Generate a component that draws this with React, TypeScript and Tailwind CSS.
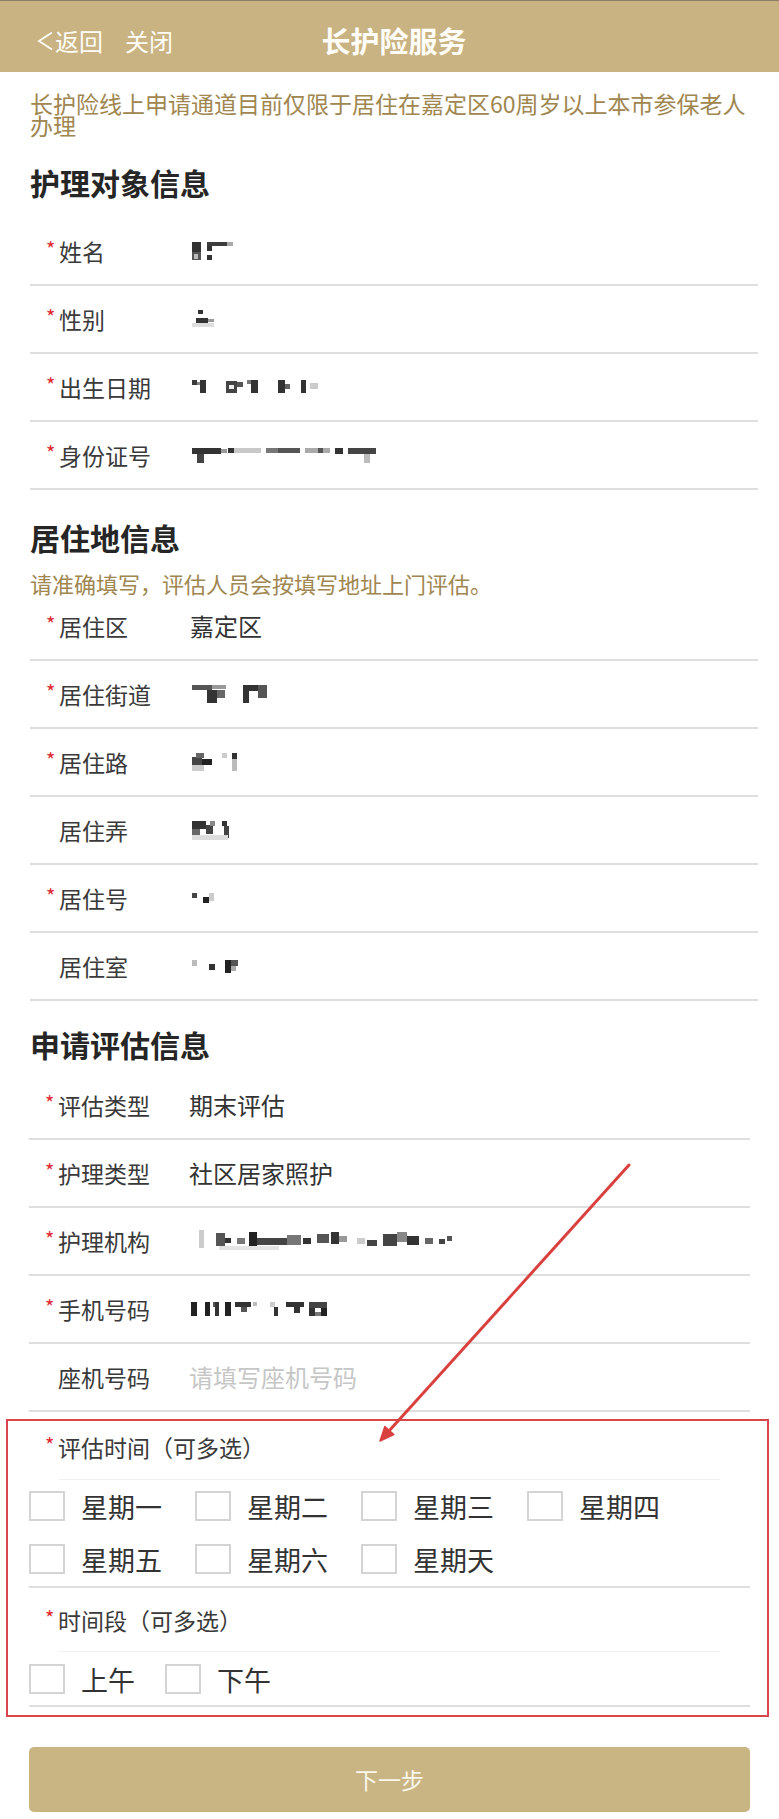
import React from "react";

type R = [number, number, number, number, string];

function Mosaic({ w, h, rects, ox = 2 }: { w: number; h: number; rects: R[]; ox?: number }) {
  return (
    <svg width={w + ox} height={h} viewBox={`0 0 ${w + ox} ${h}`} className="block">
      <g transform={`translate(${ox},0)`}>
        {rects.map((r, i) => (
          <rect key={i} x={r[0]} y={r[1]} width={r[2]} height={r[3]} fill={r[4]} />
        ))}
      </g>
    </svg>
  );
}

const M = {
  name: { w: 42, h: 19, rects: [[0, 0, 9, 10, "#333"], [0, 10, 9, 8, "#555"], [2, 12, 4, 5, "#bbb"], [15, 0, 5, 9, "#333"], [15, 0, 26, 4, "#3d3d3d"], [15, 13, 5, 5, "#333"], [35, 0, 6, 4, "#aaa"]] as R[] },
  sex: { w: 22, h: 18, rects: [[6, 0, 5, 4, "#333"], [4, 8, 12, 5, "#333"], [16, 9, 6, 3, "#999"], [0, 13, 22, 4, "#ddd"]] as R[] },
  birth: { w: 126, h: 14, rects: [[0, 0, 5, 5, "#3a3a3a"], [5, 2, 3, 3, "#888"], [8, 0, 6, 13, "#333"], [34, 1, 11, 12, "#444"], [37, 5, 5, 4, "#eee"], [45, 2, 6, 5, "#555"], [55, 0, 4, 4, "#777"], [59, 0, 7, 13, "#333"], [86, 0, 7, 13, "#333"], [93, 4, 5, 5, "#666"], [109, 0, 5, 13, "#333"], [118, 3, 8, 6, "#ccc"]] as R[] },
  id: { w: 184, h: 15, rects: [[0, 0, 29, 6, "#333"], [5, 6, 7, 9, "#444"], [29, 1, 6, 4, "#999"], [36, 0, 6, 5, "#333"], [42, 0, 27, 5, "#c8c8c8"], [74, 0, 12, 5, "#777"], [86, 0, 22, 5, "#555"], [113, 0, 25, 5, "#aaa"], [126, 0, 5, 5, "#555"], [143, 0, 8, 6, "#333"], [156, 0, 28, 6, "#444"], [172, 6, 6, 9, "#bbb"]] as R[] },
  street: { w: 75, h: 18, rects: [[0, 0, 20, 5, "#555"], [20, 0, 14, 4, "#999"], [15, 5, 10, 13, "#333"], [25, 5, 8, 8, "#666"], [51, 0, 24, 6, "#333"], [51, 0, 6, 18, "#333"], [66, 0, 9, 13, "#555"]] as R[] },
  road: { w: 46, h: 18, rects: [[0, 4, 10, 8, "#444"], [4, 0, 8, 5, "#666"], [10, 6, 10, 6, "#222"], [0, 12, 12, 6, "#ccc"], [30, 0, 5, 5, "#ccc"], [40, 0, 5, 6, "#333"], [40, 6, 5, 12, "#bbb"]] as R[] },
  lane: { w: 40, h: 19, rects: [[0, 0, 14, 8, "#333"], [0, 8, 8, 6, "#666"], [14, 4, 7, 9, "#444"], [18, 0, 5, 5, "#888"], [30, 0, 5, 5, "#333"], [32, 5, 5, 12, "#444"], [0, 14, 36, 5, "#ddd"]] as R[] },
  num: { w: 23, h: 10, rects: [[0, 0, 5, 5, "#444"], [11, 4, 6, 6, "#222"], [17, 0, 5, 8, "#ccc"]] as R[] },
  room: { w: 46, h: 13, rects: [[0, 0, 5, 6, "#bbb"], [17, 4, 6, 6, "#333"], [33, 0, 6, 13, "#222"], [39, 0, 7, 6, "#555"], [39, 6, 5, 5, "#aaa"]] as R[] },
  org: { w: 254, h: 22, rects: [[0, 0, 5, 18, "#ccc"], [17, 3, 9, 13, "#555"], [26, 8, 6, 5, "#333"], [38, 8, 8, 6, "#777"], [50, 2, 8, 16, "#222"], [58, 8, 30, 7, "#444"], [88, 5, 14, 10, "#777"], [104, 8, 8, 6, "#333"], [118, 4, 12, 9, "#555"], [132, 2, 8, 12, "#333"], [140, 6, 8, 6, "#999"], [158, 8, 8, 6, "#ccc"], [168, 10, 10, 6, "#444"], [184, 4, 14, 12, "#444"], [198, 2, 10, 10, "#888"], [208, 6, 12, 9, "#333"], [226, 8, 8, 6, "#666"], [240, 9, 6, 5, "#444"], [248, 6, 5, 5, "#555"], [20, 16, 60, 4, "#e4e4e4"]] as R[] },
  phone: { w: 152, h: 14, rects: [[0, 0, 6, 14, "#222"], [14, 0, 5, 14, "#222"], [22, 0, 5, 5, "#555"], [24, 0, 4, 14, "#333"], [34, 0, 6, 14, "#222"], [44, 0, 16, 5, "#333"], [50, 5, 6, 5, "#555"], [62, 0, 4, 4, "#bbb"], [79, 0, 5, 5, "#ccc"], [83, 5, 4, 9, "#333"], [95, 0, 18, 5, "#333"], [103, 5, 6, 6, "#333"], [118, 0, 18, 6, "#444"], [118, 6, 6, 8, "#333"], [130, 6, 6, 8, "#222"], [124, 10, 6, 4, "#777"]] as R[] },
};

function Label({ text, req }: { text: string; req?: boolean }) {
  return (
    <div className="flex items-center pl-[16px] text-[23px] leading-[24px] text-[#3a3a3a] whitespace-nowrap">
      <span className="w-[13px] text-[20px] leading-none text-[#e0282f] mb-[4px]">{req ? "*" : ""}</span>
      <span>{text}</span>
    </div>
  );
}

function Row({ label, req, children }: { label: string; req?: boolean; children: React.ReactNode }) {
  return (
    <div className="flex items-center h-[68px] border-b-2 border-[#dedede]">
      <div className="w-[160px] shrink-0">
        <Label text={label} req={req} />
      </div>
      <div className="flex items-center text-[24px] leading-[24px] text-[#333]">{children}</div>
    </div>
  );
}

function Title({ text, cls }: { text: string; cls: string }) {
  return <h2 className={`px-[30px] text-[30px] font-bold leading-[30px] text-[#262626] ${cls}`}>{text}</h2>;
}

function Box() {
  return <div className="w-[36px] h-[30px] border-2 border-[#d4d4d4] bg-white shrink-0" />;
}

function Check({ text }: { text: string }) {
  return (
    <div className="flex items-center">
      <Box />
      <span className="ml-[16px] text-[27px] leading-none text-[#333]">{text}</span>
    </div>
  );
}

export default function App() {
  return (
    <div className="relative w-full min-h-[1819px] bg-white font-['Noto_Sans_CJK_SC','Noto_Sans',sans-serif]">
      <header className="h-[72px] bg-[#c9b382] border-t border-[#8d806a] grid grid-cols-[1fr_auto_1fr] items-center pt-[8px] text-[#fffdf8]">
        <div className="flex items-center pl-[37px]">
          <svg width="17" height="20" viewBox="0 0 17 20" className="block">
            <polyline points="15,1.5 2,10 15,18.5" fill="none" stroke="#fffdf8" strokeWidth="1.8" strokeLinejoin="miter" />
          </svg>
          <span className="ml-[1px] text-[24px] leading-none">返回</span>
          <span className="ml-[22px] text-[24px] leading-none">关闭</span>
        </div>
        <div className="pl-[9px] text-[29px] font-bold leading-none">长护险服务</div>
        <div />
      </header>

      <div className="pl-[30px] pr-[24px] pt-[20px] text-[23px] leading-[22px] text-[#a0864f]">
        长护险线上申请通道目前仅限于居住在嘉定区60周岁以上本市参保老人办理
      </div>

      <Title text="护理对象信息" cls="mt-[31px] mb-[21px]" />
      <div className="ml-[30px] mr-[21px]">
        <Row label="姓名" req><Mosaic {...M.name} /></Row>
        <Row label="性别" req><Mosaic {...M.sex} /></Row>
        <Row label="出生日期" req><Mosaic {...M.birth} /></Row>
        <Row label="身份证号" req><Mosaic {...M.id} /></Row>
      </div>

      <Title text="居住地信息" cls="mt-[32px]" />
      <div className="mt-[21px] px-[30px] text-[22px] leading-[20px] text-[#a0864f]">请准确填写，评估人员会按填写地址上门评估。</div>
      <div className="ml-[30px] mr-[21px]">
        <Row label="居住区" req>嘉定区</Row>
        <Row label="居住街道" req><Mosaic {...M.street} /></Row>
        <Row label="居住路" req><Mosaic {...M.road} /></Row>
        <Row label="居住弄"><Mosaic {...M.lane} /></Row>
        <Row label="居住号" req><Mosaic {...M.num} /></Row>
        <Row label="居住室"><Mosaic {...M.room} /></Row>
      </div>

      <Title text="申请评估信息" cls="mt-[28px] mb-[13px]" />
      <div className="ml-[29px] mr-[29px]">
        <Row label="评估类型" req>期末评估</Row>
        <Row label="护理类型" req>社区居家照护</Row>
        <Row label="护理机构" req><Mosaic {...M.org} ox={10} /></Row>
        <Row label="手机号码" req><Mosaic {...M.phone} /></Row>
        <Row label="座机号码"><span className="text-[#c6c6c6]">请填写座机号码</span></Row>
      </div>

      <div className="ml-[6px] mr-[10px] mt-[7px] border-2 border-[#d9464c] pl-[21px] pr-[17px] pt-[14px] pb-[8px]">
        <Label text="评估时间（可多选）" req />
        <div className="mt-[20px] ml-[30px] mr-[30px] h-px bg-[#f0f0f0]" />
        <div className="mt-[11px] grid grid-cols-[166px_166px_166px_166px] gap-y-[23px]">
          <Check text="星期一" />
          <Check text="星期二" />
          <Check text="星期三" />
          <Check text="星期四" />
          <Check text="星期五" />
          <Check text="星期六" />
          <Check text="星期天" />
        </div>
        <div className="mt-[12px] h-[2px] bg-[#dedede]" />
        <div className="mt-[20px]">
          <Label text="时间段（可多选）" req />
        </div>
        <div className="mt-[19px] ml-[30px] mr-[30px] h-px bg-[#f0f0f0]" />
        <div className="mt-[12px] flex gap-[30px]">
          <Check text="上午" />
          <Check text="下午" />
        </div>
        <div className="mt-[11px] h-[2px] bg-[#dedede]" />
      </div>

      <div className="mx-[29px] mt-[30px] mb-[9px] h-[65px] rounded-[5px] bg-[#c9b584] flex items-center justify-center text-[23px] text-[#fbf6ea]">
        下一步
      </div>

      <svg className="absolute left-[370px] top-[1155px] pointer-events-none" width="270" height="295" viewBox="0 0 270 295">
        <line x1="259" y1="10" x2="19.4" y2="275.6" stroke="#d9413f" strokeWidth="3" strokeLinecap="round" />
        <polygon points="10,286 23.8,279.6 14.9,271.6" fill="#d9413f" stroke="#d9413f" strokeWidth="1.5" strokeLinejoin="round" />
      </svg>
    </div>
  );
}
